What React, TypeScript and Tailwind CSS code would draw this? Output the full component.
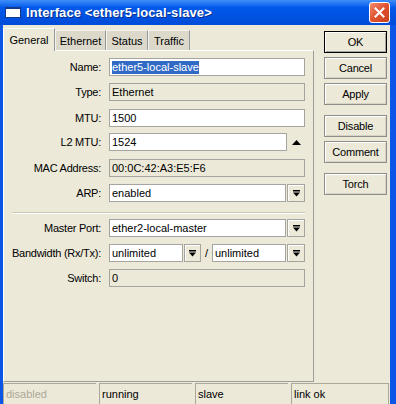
import type { ReactNode } from "react";

function DropIcon() {
  return (
    <svg width="7" height="7" viewBox="0 0 7 7">
      <rect x="0" y="0" width="7" height="1.5" fill="#000" />
      <path d="M0 2.5h7L3.5 6.5z" fill="#000" />
    </svg>
  );
}

function DropBtn({ w = 18 }: { w?: number }) {
  return (
    <div
      className={`flex h-[18px] shrink-0 items-center justify-center border border-[#a5a49e] bg-[#ece9d8] shadow-[inset_1px_1px_0_#fff] ${
        w === 17 ? "w-[17px]" : "w-[18px]"
      }`}
    >
      <DropIcon />
    </div>
  );
}

function Box({
  children,
  white = true,
  className = "",
}: {
  children?: ReactNode;
  white?: boolean;
  className?: string;
}) {
  return (
    <div
      className={`flex h-[18px] shrink-0 items-center overflow-hidden whitespace-nowrap border border-[#a5a49e] pl-[2px] ${
        white ? "bg-white" : "bg-[#ece9d8]"
      } ${className}`}
    >
      {children}
    </div>
  );
}

function Row({
  label,
  className = "",
  children,
}: {
  label: string;
  className?: string;
  children: ReactNode;
}) {
  return (
    <div className={`flex h-[18px] items-center ${className}`}>
      <span className="w-[97px] shrink-0 text-right tracking-[-0.25px] whitespace-nowrap">
        {label}
      </span>
      <div className="ml-[8px] flex items-center">{children}</div>
    </div>
  );
}

function Btn({ label, def = false, className = "" }: { label: string; def?: boolean; className?: string }) {
  return (
    <div
      className={`flex h-[22px] items-center justify-center border bg-[#ece9d8] tracking-[-0.2px] ${
        def
          ? "border-black shadow-[inset_1px_1px_0_#fff,inset_-1px_-1px_0_#a5a49e]"
          : "border-[#8e8d88] shadow-[inset_1px_1px_0_#fff,inset_-1px_-1px_0_#d6d3c6]"
      } ${className}`}
    >
      {label}
    </div>
  );
}

const tabs = ["General", "Ethernet", "Status", "Traffic"];
const tabW = ["w-[52px]", "w-[51px]", "w-[42px]", "w-[42px]"];

export default function App() {
  return (
    <div className="flex h-[404px] w-[396px] flex-col overflow-hidden bg-[#0b56e6] font-['Liberation_Sans',Arial,sans-serif] text-[11px] leading-none text-black">
      {/* Title bar */}
      <div className="flex h-[25px] shrink-0 items-center bg-linear-to-b from-[#3d8ef8] via-[#0059ea] via-30% to-[#004bd9] pl-[5px] pr-[6px]">
        <div className="h-[11px] w-[16px] border border-t-2 border-[#15398a] bg-white" />
        <span className="ml-[5px] text-[13px] font-bold tracking-[0.1px] text-white [text-shadow:1px_1px_0_#0a2f8a]">
          Interface &lt;ether5-local-slave&gt;
        </span>
        <div className="ml-auto flex h-[21px] w-[21px] items-center justify-center rounded-[3px] border border-white bg-linear-to-br from-[#f08a6c] via-[#e0512e] to-[#c7401f]">
          <svg width="11" height="11" viewBox="0 0 11 11">
            <path d="M1.5 1.5l8 8M9.5 1.5l-8 8" stroke="#fff" strokeWidth="2" strokeLinecap="square" />
          </svg>
        </div>
      </div>

      {/* Body */}
      <div className="ml-[3px] mr-[6px] flex flex-1 flex-col bg-[#ece9d8]">
        <div className="flex h-[358px] shrink-0">
          {/* Tabs + panel */}
          <div className="mb-[1px] flex w-[311px] flex-col">
            <div className="flex h-[25px] shrink-0 items-end">
              {tabs.map((t, i) =>
                i === 0 ? (
                  <div
                    key={t}
                    className={`relative z-10 -mb-px flex h-[23px] items-center justify-center border border-b-0 border-t-white border-l-white border-r-[#919b9c] bg-[#ece9d8] ${tabW[i]}`}
                  >
                    {t}
                  </div>
                ) : (
                  <div
                    key={t}
                    className={`flex h-[20px] items-center justify-center border border-b-0 border-t-[#f4f3ee] border-l-[#f4f3ee] border-r-[#919b9c] bg-[#dcd9cb] pt-[1px] ${tabW[i]}`}
                  >
                    {t}
                  </div>
                )
              )}
            </div>
            <div className="flex flex-1 flex-col border border-t-white border-l-white border-r-[#a09f97] border-b-[#a09f97] pt-[7px]">
              <Row label="Name:">
                <Box className="w-[196px]">
                  <span className="bg-[#316ac5] py-[1px] text-white">ether5-local-slave</span>
                </Box>
              </Row>
              <Row label="Type:" className="mt-[7px]">
                <Box white={false} className="w-[196px]">Ethernet</Box>
              </Row>
              <Row label="MTU:" className="mt-[8px]">
                <Box className="w-[196px]">1500</Box>
              </Row>
              <Row label="L2 MTU:" className="mt-[6px]">
                <Box className="w-[178px]">1524</Box>
                <svg className="ml-[5px]" width="9" height="5" viewBox="0 0 9 5">
                  <path d="M0 5h9L4.5 0z" fill="#000" />
                </svg>
              </Row>
              <Row label="MAC Address:" className="mt-[8px]">
                <Box white={false} className="w-[196px]">00:0C:42:A3:E5:F6</Box>
              </Row>
              <Row label="ARP:" className="mt-[7px]">
                <Box className="w-[177px]">enabled</Box>
                <div className="ml-[1px]">
                  <DropBtn />
                </div>
              </Row>

              <div className="ml-[8px] mt-[10px] h-[2px] w-[293px] border-t border-b border-t-[#c9c6b6] border-b-white" />

              <Row label="Master Port:" className="mt-[5px]">
                <Box className="w-[177px]">ether2-local-master</Box>
                <div className="ml-[1px]">
                  <DropBtn />
                </div>
              </Row>
              <Row label="Bandwidth (Rx/Tx):" className="mt-[7px]">
                <Box className="w-[74px]">unlimited</Box>
                <div className="ml-[1px]">
                  <DropBtn w={17} />
                </div>
                <span className="w-[11px] text-center">/</span>
                <Box className="w-[74px]">unlimited</Box>
                <div className="ml-[1px]">
                  <DropBtn />
                </div>
              </Row>
              <Row label="Switch:" className="mt-[7px]">
                <Box white={false} className="w-[196px]">0</Box>
              </Row>
            </div>
          </div>

          {/* Buttons */}
          <div className="ml-[10px] flex w-[63px] flex-col pt-[6px]">
            <Btn label="OK" def />
            <Btn label="Cancel" className="mt-[4px]" />
            <Btn label="Apply" className="mt-[4px]" />
            <Btn label="Disable" className="mt-[10px]" />
            <Btn label="Comment" className="mt-[4px]" />
            <Btn label="Torch" className="mt-[10px]" />
          </div>
        </div>

        {/* Status bar */}
        <div className="flex h-[21px] shrink-0 gap-[3px] pr-[1px]">
          <div className="flex w-[93px] items-center border-t border-l border-[#aca899] pl-[2px] text-[#aca899]">
            disabled
          </div>
          <div className="flex w-[93px] items-center border-t border-l border-[#aca899] pl-[2px]">
            running
          </div>
          <div className="flex w-[93px] items-center border-t border-l border-[#aca899] pl-[2px]">
            slave
          </div>
          <div className="flex flex-1 items-center border-t border-l border-r border-[#aca899] pl-[2px]">
            link ok
          </div>
        </div>
      </div>
    </div>
  );
}
